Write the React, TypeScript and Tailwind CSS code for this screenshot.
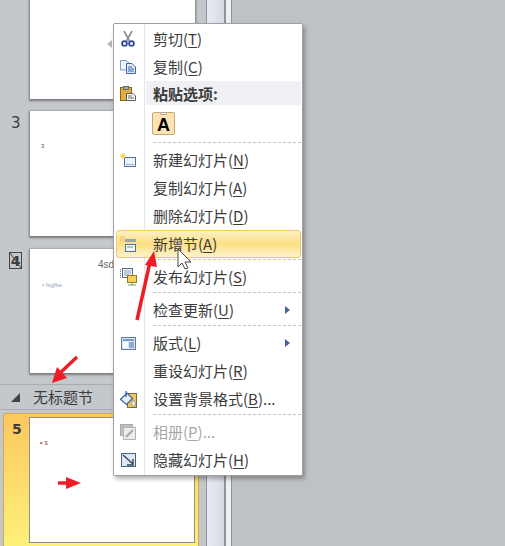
import React from "react";

const Scissors = () => (
  <svg width="14" height="16" viewBox="0 0 14 16">
    <path d="M3 0 L8.5 10 M11 0 L5.5 10" stroke="#8a909c" strokeWidth="1.7" fill="none" />
    <circle cx="3.5" cy="12.5" r="2.4" fill="none" stroke="#2c4c9c" strokeWidth="1.8" />
    <circle cx="10.5" cy="12.5" r="2.4" fill="none" stroke="#2c4c9c" strokeWidth="1.8" />
  </svg>
);

const CopyIcon = () => (
  <svg width="16" height="14" viewBox="0 0 16 14">
    <path d="M0.5 0.5H6L9 3V10H0.5Z" fill="#eef3fa" stroke="#7d9ac6" />
    <path d="M6.5 3.5H12L15.5 7V13.5H6.5Z" fill="#dfe9f6" stroke="#3a66ae" />
    <path d="M8 7h4M8 9h6M8 11h6" stroke="#3a66ae" />
  </svg>
);

const PasteIcon = () => (
  <svg width="16" height="15" viewBox="0 0 16 15">
    <rect x="0.5" y="1.5" width="11" height="13" fill="#e2ae42" stroke="#87621e" />
    <rect x="3.5" y="0.5" width="5" height="3" fill="#a8a8a8" stroke="#6a6a6a" />
    <path d="M6.5 7.5H13L15.5 10V14.5H6.5Z" fill="#f8f8f8" stroke="#5c5c5c" />
    <path d="M8 10h4M8 12h6" stroke="#666" />
  </svg>
);

const NewSlideIcon = () => (
  <svg width="16" height="14" viewBox="0 0 16 14">
    <rect x="4.5" y="4.5" width="11" height="9" fill="#eef3fa" stroke="#52719f" />
    <path d="M6 11.5h8" stroke="#9db3d1" />
    <path d="M3 0v6M0 3h6M1 1l4 4M5 1L1 5" stroke="#f0cf3c" />
  </svg>
);

const SectionIcon = () => (
  <svg width="16" height="16" viewBox="0 0 16 16">
    <path d="M0 1h5M0 3h5M0 5h5M1 0v6M3 0v6" stroke="#edc65a" strokeDasharray="1 1" />
    <rect x="5" y="3" width="11" height="3" fill="#9aa6b6" />
    <rect x="5.5" y="8.5" width="10" height="7" fill="#f4f6fa" stroke="#52719f" />
    <path d="M7 11h6" stroke="#7c93b3" />
  </svg>
);

const PublishIcon = () => (
  <svg width="17" height="18" viewBox="0 0 17 18">
    <path d="M0.5 1v10" stroke="#5c6f88" strokeDasharray="1 1" />
    <rect x="2.5" y="0.5" width="10" height="9" fill="#eef2f7" stroke="#5c6f88" />
    <path d="M4 3h7M4 5h7M4 7h5" stroke="#8fa3bd" />
    <rect x="7.5" y="7.5" width="9" height="7" fill="#f4d25e" stroke="#9a7a1e" />
    <path d="M8 17h8M12 15v2" stroke="#62a85a" />
  </svg>
);

const LayoutIcon = () => (
  <svg width="15" height="13" viewBox="0 0 15 13">
    <rect x="0.5" y="0.5" width="14" height="12" fill="#dbe6f4" stroke="#5c7ba6" />
    <rect x="2" y="2" width="11" height="2" fill="#7f9cc6" />
    <rect x="2" y="5" width="5" height="6" fill="#fff" />
    <path d="M8 6h5M8 8h5M8 10h5" stroke="#4d6d9c" />
  </svg>
);

const BackgroundIcon = () => (
  <svg width="17" height="17" viewBox="0 0 17 17">
    <rect x="7.5" y="2.5" width="9" height="14" fill="#f3c75a" stroke="#7d6c3a" />
    <path d="M0.5 8.5 L7 2 L12.5 7.5 L6.5 13.5 Z" fill="#e7eefa" stroke="#2e5ca8" strokeWidth="1.2" />
    <path d="M6 0v6" stroke="#2e5ca8" strokeWidth="1.2" />
    <path d="M12 10h3v5h-3z" fill="#fff" stroke="#777" strokeWidth="0.6" />
  </svg>
);

const AlbumIcon = () => (
  <svg width="16" height="16" viewBox="0 0 16 16">
    <rect x="0.5" y="0.5" width="12" height="11" fill="#bdbdbd" stroke="#aaa" />
    <rect x="3.5" y="3.5" width="12" height="12" fill="#ececec" stroke="#b4b4b4" />
    <path d="M6 13 L13 6" stroke="#a8a8a8" strokeWidth="2" />
  </svg>
);

const HideIcon = () => (
  <svg width="15" height="14" viewBox="0 0 15 14">
    <rect x="0.5" y="0.5" width="14" height="13" fill="#dfe7f2" stroke="#4c6181" />
    <path d="M2 2 L12 11 M12 6v6H6" stroke="#34465f" strokeWidth="1.4" fill="none" />
  </svg>
);

const Key = ({ children }: { children: string }) => <span className="underline underline-offset-2">{children}</span>;

interface ItemProps {
  icon?: React.ReactNode;
  label: string;
  hotkey: string;
  tail?: string;
  arrow?: boolean;
  active?: boolean;
  disabled?: boolean;
}

const MenuItem = ({ icon, label, hotkey, tail = "", arrow, active, disabled }: ItemProps) => (
  <div
    className={`flex h-7 items-center rounded-[3px] border ${
      active
        ? "border-[#f2c867] bg-gradient-to-b from-[#fdf0c2] via-[#fcdf83] to-[#fdf3cb]"
        : "border-transparent"
    } ${disabled ? "text-[#a6a6a6]" : "text-[#3c3c3c]"}`}
  >
    <div className="flex w-[22px] shrink-0 justify-center">{icon}</div>
    <div className="ml-[14px] flex-1 whitespace-nowrap pb-[2px]">
      {label}(<Key>{hotkey}</Key>){tail}
    </div>
    {arrow && <div className="mr-[10px] h-0 w-0 border-y-[4px] border-l-[5px] border-y-transparent border-l-[#4a5fa5]" />}
  </div>
);

const Sep = () => <div className="mb-[3px] ml-[37px] mt-[1px] border-t border-dashed border-[#c5c5c5]" />;

const ContextMenu = () => (
  <div className="absolute left-[113px] top-[23px] h-[453px] w-[190px] rounded-[2px] border border-[#a0a0a0] bg-white pl-[2px] pr-[1px] pt-[1px] text-[15px] leading-none shadow-[2px_3px_4px_rgba(0,0,0,0.3)]">
    <div className="absolute bottom-0 left-[30px] top-0 w-px bg-[#e3e5e8]" />
    <div className="relative">
      <MenuItem icon={<Scissors />} label="剪切" hotkey="T" />
      <MenuItem icon={<CopyIcon />} label="复制" hotkey="C" />
      <div className="flex h-[24px] items-center">
        <div className="flex w-[24px] shrink-0 justify-center"><PasteIcon /></div>
        <div className="ml-[6px] flex h-full flex-1 items-center bg-[#eff0f4] pl-[7px] font-bold text-[#3c3c3c]">粘贴选项:</div>
      </div>
      <div className="flex h-[37px] items-center pl-[36px]">
        <div className="relative flex h-[23px] w-[23px] items-center justify-center rounded-[2px] border border-[#c9a875] bg-[#fde3b4]">
          <div className="absolute -top-[1px] left-[7px] h-[3px] w-[7px] rounded-[1px] border border-[#b5a68c] bg-white" />
          <span className="mt-[3px] font-['Liberation_Sans'] text-[18px] font-bold text-black">A</span>
        </div>
      </div>
      <div className="mb-[3px] ml-[37px] border-t border-dashed border-[#c5c5c5]" />
      <MenuItem icon={<NewSlideIcon />} label="新建幻灯片" hotkey="N" />
      <MenuItem label="复制幻灯片" hotkey="A" />
      <MenuItem label="删除幻灯片" hotkey="D" />
      <MenuItem icon={<SectionIcon />} label="新增节" hotkey="A" active />
      <Sep />
      <MenuItem icon={<PublishIcon />} label="发布幻灯片" hotkey="S" />
      <Sep />
      <MenuItem label="检查更新" hotkey="U" arrow />
      <Sep />
      <MenuItem icon={<LayoutIcon />} label="版式" hotkey="L" arrow />
      <MenuItem label="重设幻灯片" hotkey="R" />
      <MenuItem icon={<BackgroundIcon />} label="设置背景格式" hotkey="B" tail="..." />
      <Sep />
      <MenuItem icon={<AlbumIcon />} label="相册" hotkey="P" tail="..." disabled />
      <MenuItem icon={<HideIcon />} label="隐藏幻灯片" hotkey="H" />
    </div>
  </div>
);

const Thumb = ({ className = "", children }: { className?: string; children?: React.ReactNode }) => (
  <div className={`relative w-[165px] bg-white shadow-[0_1px_2px_1px_rgba(70,70,70,0.6)] ${className}`}>{children}</div>
);

const SlidePanel = () => (
  <div className="flex w-[206px] shrink-0 flex-col bg-[#c4c7cb]">
    <div className="ml-[30px]">
      <Thumb className="h-[99px]" />
    </div>
    <div className="mt-[12px] flex">
      <div className="w-[30px] pl-[11px] pt-[4px] font-['DejaVu_Sans'] text-[15px] leading-4 text-[#3c3c3c]">3</div>
      <Thumb className="h-[125px]">
        <span className="absolute left-[11px] top-[32px] font-['Liberation_Sans'] text-[6px] leading-none text-[#555]">3</span>
      </Thumb>
    </div>
    <div className="mt-[13px] flex">
      <div className="w-[30px] pl-[9px] pt-[3px]">
        <div className="relative flex h-[17px] w-[13px] items-center justify-center border border-[#444] font-['DejaVu_Sans'] text-[14px] font-bold leading-none text-[#3c3c3c]">
          4
          <svg className="absolute left-0 top-0" width="11" height="15" viewBox="0 0 11 15">
            <path d="M0 0 L11 15" stroke="#444" strokeWidth="1" />
          </svg>
        </div>
      </div>
      <Thumb className="h-[124px]">
        <span className="absolute left-[68px] top-[11px] font-['Liberation_Sans'] text-[10px] leading-none text-[#666]">4sd</span>
        <span className="absolute left-[12px] top-[33px] font-['Liberation_Sans'] text-[6px] leading-none text-[#9aa4c8]">• fsgfbe</span>
      </Thumb>
    </div>
    <div className="mt-[11px] flex h-[26px] shrink-0 items-center border-y border-[#a9abae] pl-[11px] text-[15px] text-[#3c3c3c]">
      <div className="h-0 w-0 border-b-[9px] border-l-[9px] border-b-[#444] border-l-transparent" />
      <span className="ml-[13px]">无标题节</span>
    </div>
    <div className="ml-[3px] mt-[3px] flex h-[140px] w-[196px] shrink-0 rounded-t-[3px] border border-[#d3a845] bg-gradient-to-b from-[#fcc85d] to-[#fdf27c]">
      <div className="w-[25px] pl-[8px] pt-[7px] font-['DejaVu_Sans'] text-[14px] font-bold leading-4 text-[#3c3c3c]">5</div>
      <div className="mt-[3px]">
        <Thumb className="h-[126px] w-[166px] border border-[#8d8d8d] shadow-none">
          <span className="absolute left-[10px] top-[21px] font-['Liberation_Sans'] text-[7px] leading-none text-[#9a4a3a]">• s</span>
        </Thumb>
      </div>
    </div>
  </div>
);

const App = () => {
  return (
    <div className="relative flex h-[546px] w-[505px] overflow-hidden bg-[#bfc2c5] font-['Noto_Sans_CJK_SC',sans-serif]">
      <SlidePanel />
      {/* scrollbar strip */}
      <div className="w-[20px] shrink-0 border-l border-r-2 border-[#8f949c] bg-gradient-to-r from-[#e8ecf2] to-[#d6dbe3]" />
      <div className="w-[6px] shrink-0 border-r border-[#8f949c] bg-[#eef0f3]" />
      <div className="flex-1" />

      <div className="absolute left-[107px] top-[40px] h-0 w-0 border-y-[4px] border-r-[5px] border-y-transparent border-r-[#b4b6ba]" />
      <ContextMenu />

      {/* annotation arrows */}
      <svg className="absolute left-0 top-0" width="505" height="546" viewBox="0 0 505 546">
        <path d="M137 320 L150 262" stroke="#ee1c25" strokeWidth="3.5" />
        <path d="M145 265 L154 251 L157 267 Z" fill="#ee1c25" />
        <path d="M77 357 L60 373" stroke="#ee1c25" strokeWidth="3.5" />
        <path d="M52 383 L57 367 L67 378 Z" fill="#ee1c25" />
        <path d="M58 483 L70 483" stroke="#ee1c25" strokeWidth="3.5" />
        <path d="M66 477 L81 483 L66 489 Z" fill="#ee1c25" />
        <path d="M178 249 V267 L182 263 L185 269 L188 268 L185 262 L191 262 Z" fill="#fff" stroke="#444" strokeWidth="1" />
      </svg>
    </div>
  );
};

export default App;
